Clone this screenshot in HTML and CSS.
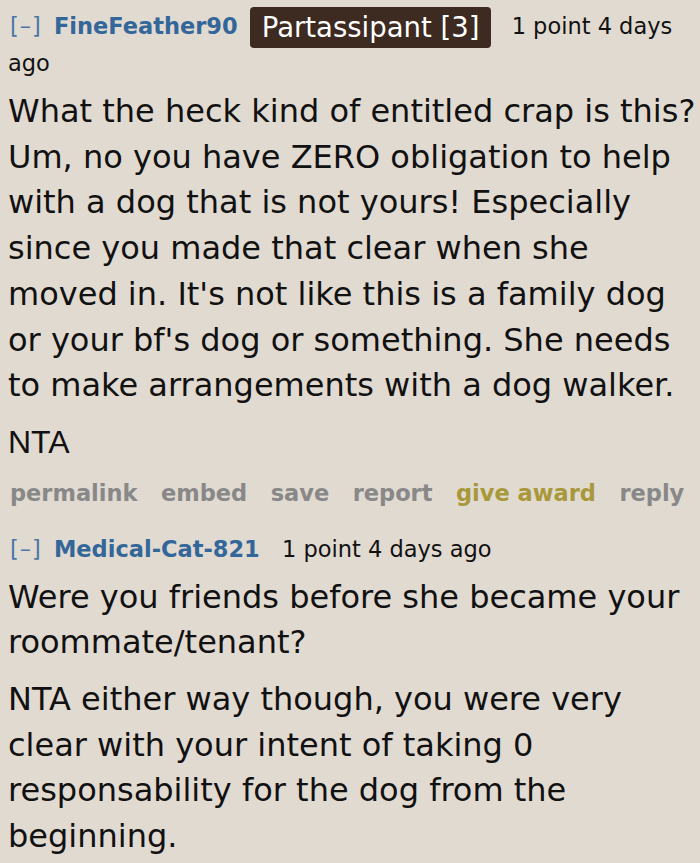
FILE: index.html
```html
<!DOCTYPE html>
<html>
<head>
<meta charset="utf-8">
<link rel="stylesheet" href="styles.css">
</head>
<body>
<div class="thread">
  <div class="comment">
    <div class="tagline">
      <span class="expand">[–]</span> <span class="author">FineFeather90</span> <span class="flair">Partassipant [3]</span> <span class="score">1 point 4 days ago</span>
    </div>
    <div class="md">
      <p>What the heck kind of entitled crap is this? Um, no you have ZERO obligation to help with a dog that is not yours! Especially since you made that clear when she moved in. It's not like this is a family dog or your bf's dog or something. She needs to make arrangements with a dog walker.</p>
      <p class="arial">NTA</p>
    </div>
    <ul class="buttons">
      <li>permalink</li>
      <li>embed</li>
      <li>save</li>
      <li>report</li>
      <li class="award">give award</li>
      <li>reply</li>
    </ul>
  </div>
  <div class="comment second">
    <div class="tagline">
      <span class="expand">[–]</span> <span class="author">Medical-Cat-821</span> <span class="score">1 point 4 days ago</span>
    </div>
    <div class="md">
      <p>Were you friends before she became your roommate/tenant?</p>
      <p>NTA either way though, you were very clear with your intent of taking 0 responsability for the dog from the beginning.</p>
    </div>
  </div>
</div>
</body>
</html>
```

FILE: styles.css
```css
html, body {
  margin: 0;
  padding: 0;
  background: #e1dad1;
}
body {
  font-family: "DejaVu Sans", Verdana, sans-serif;
  color: #111;
}
.thread {
  width: 690px;
  padding: 0 0 0 8px;
}
.tagline {
  font-size: 22.5px;
  line-height: 30px;
  color: #111;
}
.comment:first-child .tagline {
  padding-top: 7px;
}
.expand {
  color: #4a76a8;
  margin-left: 2px;
  margin-right: 5px;
  letter-spacing: 1px;
}
.author {
  color: #336699;
  font-weight: bold;
  margin-right: 5px;
}
.second .author {
  margin-right: 15px;
}
.flair {
  display: inline-block;
  background: #3d2a20;
  color: #fff;
  font-size: 27.5px;
  height: 41px;
  line-height: 40px;
  padding: 0 12px;
  border-radius: 4px;
  vertical-align: middle;
  margin-right: 13px;
}
.md {
  font-size: 32px;
  line-height: 45.7px;
  color: #111;
  margin-top: 11px;
}
.md p {
  margin: 0 0 11px 0;
}
.arial {
  font-family: "Liberation Sans", Arial, sans-serif;
}
.buttons {
  list-style: none;
  margin: 12px 0 0 0;
  padding: 0 0 0 2px;
  display: flex;
  gap: 23.5px;
  font-size: 22.5px;
  line-height: 30px;
  font-weight: bold;
  color: #888;
}
.buttons .award {
  color: #a8983a;
}
.second {
  margin-top: 26px;
}
```
